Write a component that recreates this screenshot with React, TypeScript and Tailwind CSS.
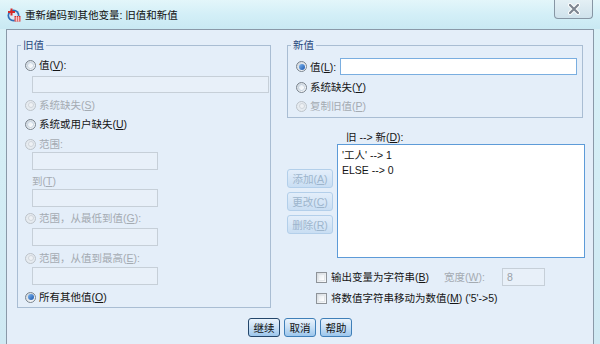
import React from "react";

const U = ({ c }: { c: string }) => <span className="underline underline-offset-[1px]">{c}</span>;

function Radio({ checked = false, disabled = false }: { checked?: boolean; disabled?: boolean }) {
  if (disabled)
    return (
      <span className="shrink-0 w-[11px] h-[11px] rounded-full border border-[#bcc3ca] bg-[#e6ebf0] flex items-center justify-center">
        <span className="w-[6px] h-[6px] rounded-full border border-[#d0d6dc] bg-[#eef1f4]" />
      </span>
    );
  return (
    <span className="shrink-0 w-[11px] h-[11px] rounded-full border border-[#7a848e] bg-gradient-to-br from-[#cdd4db] to-[#ffffff] flex items-center justify-center">
      {checked ? (
        <span className="w-[6px] h-[6px] rounded-full bg-gradient-to-br from-[#7db6f0] to-[#1b57ad]" />
      ) : (
        <span className="w-[7px] h-[7px] rounded-full border border-[#c4d2e0] bg-gradient-to-br from-[#e6ecf2] to-[#ffffff]" />
      )}
    </span>
  );
}

function Check() {
  return (
    <span className="shrink-0 w-[11px] h-[11px] border border-[#8e9399] bg-gradient-to-br from-[#d4d9de] to-[#fbfcfd] flex items-center justify-center">
      <span className="w-[7px] h-[7px] border border-[#e3e7eb] bg-gradient-to-br from-[#e9edf1] to-[#ffffff]" />
    </span>
  );
}

function Btn({ label, m, disabled = false, def = false }: { label: string; m: string; disabled?: boolean; def?: boolean }) {
  if (disabled)
    return (
      <div className="w-[46px] h-[19px] rounded-[3px] border border-[#b3cfea] bg-gradient-to-b from-[#e3eefa] to-[#c9def3] flex items-center justify-center text-[#9db5cc]">
        {label}(<U c={m} />)
      </div>
    );
  return (
    <div
      className={
        def
          ? "w-[32px] h-[19px] rounded-[3px] border border-[#24466b] bg-gradient-to-b from-[#eaf3fc] via-[#c7dff5] to-[#9cc6ec] flex items-center justify-center text-[#111]"
          : "w-[32px] h-[19px] rounded-[3px] border border-[#3f7fb8] bg-gradient-to-b from-[#eaf3fc] via-[#c7dff5] to-[#9cc6ec] flex items-center justify-center text-[#111]"
      }
    >
      {label}
    </div>
  );
}

function TitleIcon() {
  return (
    <svg width="14" height="14" viewBox="0 0 14 14">
      <circle cx="6.5" cy="7.5" r="6" fill="#2f6fb8" />
      <circle cx="6.5" cy="7.5" r="4.3" fill="#dceaf7" />
      <rect x="1" y="3" width="7" height="2" fill="#d62a2a" />
      <rect x="3.5" y="0.5" width="2" height="7" fill="#d62a2a" />
      <rect x="7.5" y="8" width="6" height="5.5" fill="#d93030" />
      <path d="M7.5 10h6M7.5 12h6M9.5 8v5.5M11.5 8v5.5" stroke="#ffffff" strokeWidth="0.6" />
    </svg>
  );
}

function CloseX() {
  return (
    <svg width="14" height="12" viewBox="0 0 14 12">
      <path d="M3 2L11 10M11 2L3 10" stroke="#ffffff" strokeWidth="4" strokeLinecap="round" />
      <path d="M3 2L11 10M11 2L3 10" stroke="#7d8590" strokeWidth="2.2" strokeLinecap="round" />
    </svg>
  );
}

export default function App() {
  return (
    <div className="w-[600px] h-[344px] overflow-hidden flex flex-col bg-gradient-to-b from-[#d9f1f7] to-[#cfe9f3] font-['Liberation_Sans','Noto_Sans_CJK_SC',sans-serif] text-[10.5px] leading-[14px] text-[#151515]">
      {/* title bar */}
      <div className="h-[29px] shrink-0 flex items-start bg-gradient-to-b from-[#e3f6fa] via-[#d3eff7] to-[#c9e9f3]">
        <div className="ml-[7px] mt-[8px]">
          <TitleIcon />
        </div>
        <span className="ml-[4px] mt-[8px] text-[#111]">重新编码到其他变量: 旧值和新值</span>
        <div className="ml-auto mr-[7px] w-[39px] h-[19px] rounded-b-[4px] border border-t-0 border-[#8796a4] bg-gradient-to-b from-[#e4f0f5] to-[#cfe2ec] flex items-center justify-center">
          <CloseX />
        </div>
      </div>

      {/* body frame */}
      <div className="flex-1 flex px-[6px]">
        <div className="flex-1 border-l border-t border-r border-[#8a99a8] bg-[#e4eef9] flex flex-col">
          <div className="flex pl-[10px]">
            {/* left group */}
            <div className="relative mt-[15px] w-[254px] h-[263px] border border-[#a9bdd3] flex flex-col pl-[7px]">
              <span className="absolute -top-[8px] left-[3px] px-[2px] bg-[#e4eef9] text-[#2a4a80]">旧值</span>
              <div className="mt-[12px] h-[14px] flex items-center gap-[3px]">
                <Radio />
                <span>值(<U c="V" />):</span>
              </div>
              <div className="mt-[4px] ml-[7px] w-[237px] h-[17px] border border-[#c6cfd8] bg-[#e8f0f9]" />
              <div className="mt-[5px] h-[14px] flex items-center gap-[3px] text-[#a4abb2]">
                <Radio disabled />
                <span>系统缺失(<U c="S" />)</span>
              </div>
              <div className="mt-[5px] h-[14px] flex items-center gap-[3px]">
                <Radio />
                <span>系统或用户缺失(<U c="U" />)</span>
              </div>
              <div className="mt-[6px] h-[14px] flex items-center gap-[3px] text-[#a4abb2]">
                <Radio disabled />
                <span>范围:</span>
              </div>
              <div className="mt-[1px] ml-[7px] w-[126px] h-[18px] border border-[#c6cfd8] bg-[#e8f0f9]" />
              <div className="mt-[4px] ml-[7px] h-[14px] flex items-center text-[#a4abb2]">
                <span>到(<U c="T" />)</span>
              </div>
              <div className="mt-[1px] ml-[7px] w-[126px] h-[18px] border border-[#c6cfd8] bg-[#e8f0f9]" />
              <div className="mt-[4px] h-[14px] flex items-center gap-[3px] text-[#a4abb2]">
                <Radio disabled />
                <span>范围，从最低到值(<U c="G" />):</span>
              </div>
              <div className="mt-[3px] ml-[7px] w-[126px] h-[18px] border border-[#c6cfd8] bg-[#e8f0f9]" />
              <div className="mt-[5px] h-[14px] flex items-center gap-[3px] text-[#a4abb2]">
                <Radio disabled />
                <span>范围，从值到最高(<U c="E" />):</span>
              </div>
              <div className="mt-[2px] ml-[7px] w-[126px] h-[18px] border border-[#c6cfd8] bg-[#e8f0f9]" />
              <div className="mt-[5px] h-[14px] flex items-center gap-[3px]">
                <Radio checked />
                <span>所有其他值(<U c="O" />)</span>
              </div>
            </div>

            {/* right column */}
            <div className="ml-[16px] w-[298px] flex flex-col">
              <div className="relative mt-[15px] w-[296px] h-[73px] border border-[#a9bdd3] flex flex-col pl-[8px]">
                <span className="absolute -top-[8px] left-[3px] px-[2px] bg-[#e4eef9] text-[#2a4a80]">新值</span>
                <div className="mt-[12px] h-[17px] flex items-center">
                  <div className="w-[44px] flex items-center gap-[3px]">
                    <Radio checked />
                    <span>值(<U c="L" />):</span>
                  </div>
                  <div className="w-[237px] h-[17px] border border-[#7aaee0] bg-white" />
                </div>
                <div className="mt-[5px] h-[14px] flex items-center gap-[3px]">
                  <Radio />
                  <span>系统缺失(<U c="Y" />)</span>
                </div>
                <div className="mt-[5px] h-[14px] flex items-center gap-[3px] text-[#a4abb2]">
                  <Radio disabled />
                  <span>复制旧值(<U c="P" />)</span>
                </div>
              </div>

              <div className="mt-[12px] flex">
                <div className="w-[46px] pt-[39px] flex flex-col gap-[4px]">
                  <Btn label="添加" m="A" disabled />
                  <Btn label="更改" m="C" disabled />
                  <Btn label="删除" m="R" disabled />
                </div>
                <div className="ml-[4px] flex flex-col">
                  <div className="h-[14px] pl-[9px] flex items-center">
                    <span>旧 --&gt; 新(<U c="D" />):</span>
                  </div>
                  <div className="w-[248px] h-[114px] border border-[#5d9bd8] bg-white flex flex-col pl-[4px] pt-[3px] gap-[1px]">
                    <span>'工人' --&gt; 1</span>
                    <span>ELSE --&gt; 0</span>
                  </div>
                </div>
              </div>

              <div className="mt-[10px] h-[18px] flex items-center pl-[29px]">
                <div className="w-[128px] flex items-center gap-[4px]">
                  <Check />
                  <span>输出变量为字符串(<U c="B" />)</span>
                </div>
                <div className="w-[58px] text-[#a4abb2]">
                  宽度(<U c="W" />):
                </div>
                <div className="w-[43px] h-[18px] border border-[#c6cfd8] bg-[#e8f0f9] pl-[4px] flex items-center text-[#9aa1a8]">8</div>
              </div>
              <div className="mt-[5px] h-[14px] flex items-center gap-[4px] pl-[29px]">
                <Check />
                <span>
                  将数值字符串移动为数值(<U c="M" />) ('5'-&gt;5)
                </span>
              </div>
            </div>
          </div>

          {/* bottom buttons */}
          <div className="mt-[10px] flex justify-center gap-[4px]">
            <Btn label="继续" m="" def />
            <Btn label="取消" m="" />
            <Btn label="帮助" m="" />
          </div>
        </div>
      </div>
    </div>
  );
}
